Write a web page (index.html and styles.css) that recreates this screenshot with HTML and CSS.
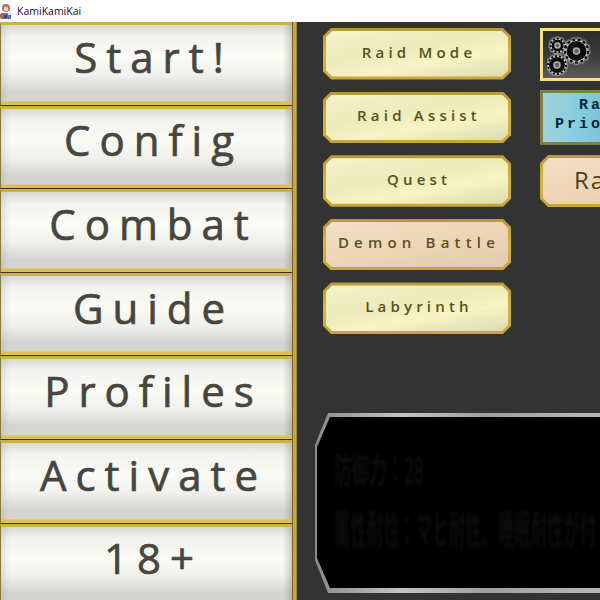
FILE: index.html
```html
<!DOCTYPE html>
<html lang="ja">
<head>
    <meta charset="UTF-8">
    <title>KamiKamiKai</title>
    <link rel="stylesheet" href="styles.css">
</head>
<body>
    <div class="titlebar">
        <svg class="appicon" width="16" height="16" viewBox="0 0 16 16">
            <rect x="1" y="10" width="10" height="6" fill="#6f6f96"/>
            <rect x="0" y="11" width="3" height="4" fill="#b5654a"/>
            <circle cx="6" cy="5" r="4" fill="#a8745a"/>
            <circle cx="6" cy="6" r="2.200" fill="#f2d2bc"/>
            <rect x="8" y="8" width="3" height="4" fill="#e8e4ea"/>
            <rect x="4" y="12" width="3" height="3" fill="#2d4f6c"/>
        </svg>
        <span>KamiKamiKai</span>
    </div>
    <div class="main">
        <div class="menu">
            <button class="menu-btn">Start!</button>
            <button class="menu-btn">Config</button>
            <button class="menu-btn">Combat</button>
            <button class="menu-btn">Guide</button>
            <button class="menu-btn">Profiles</button>
            <button class="menu-btn">Activate</button>
            <button class="menu-btn">18+</button>
        </div>
        <div class="content">
            <div class="columns">
                <div class="col">
                    <div class="gem"><div class="gem-in">Raid Mode</div></div>
                    <div class="gem"><div class="gem-in">Raid Assist</div></div>
                    <div class="gem"><div class="gem-in">Quest</div></div>
                    <div class="gem"><div class="gem-in peach">Demon Battle</div></div>
                    <div class="gem"><div class="gem-in">Labyrinth</div></div>
                </div>
                <div class="col col2">
                    <div class="gears">
                        <svg width="50" height="44" viewBox="0 0 50 44">
                            <g class="cog">
                                <circle cx="29.500" cy="19" r="10" class="body"/>
                                <circle cx="29.500" cy="19" r="11.500" class="teeth"/>
                                <circle cx="29.500" cy="19" r="3" class="hole"/>
                                <circle cx="10.500" cy="13.500" r="6" class="body"/>
                                <circle cx="10.500" cy="13.500" r="7" class="teeth small"/>
                                <circle cx="10.500" cy="13.500" r="2.500" class="hole"/>
                                <circle cx="10" cy="33" r="8" class="body"/>
                                <circle cx="10" cy="33" r="9" class="teeth small"/>
                                <circle cx="10" cy="33" r="3" class="hole"/>
                            </g>
                        </svg>
                    </div>
                    <div class="prio">Raid<br>Priority</div>
                    <div class="gem wide"><div class="gem-in peach big">Raid Boss</div></div>
                </div>
            </div>
            <div class="panel">
                <div class="panel-in">
                    <p class="l1">防御力：28</p>
                    <p class="l2">属性耐性：マヒ耐性、睡眠耐性が付</p>
                </div>
            </div>
        </div>
    </div>
</body>
</html>
```

FILE: styles.css
```css
html, body {
    margin: 0;
    height: 600px;
    overflow: hidden;
    background: #333333;
}
.titlebar {
    height: 22px;
    background: #fff;
    display: flex;
    align-items: center;
    font-family: "Open Sans", sans-serif;
    font-size: 10.500px;
    color: #1a0a30;
}
.appicon {
    margin-right: 1px;
    flex: none;
}
.main {
    display: flex;
    height: 578px;
    overflow: hidden;
}
.menu {
    width: 297px;
    flex: none;
    box-sizing: border-box;
    padding-right: 5px;
    background: linear-gradient(90deg, #6e6030 0, #6e6030 1px, #c9a93c 1.500px, #c9a93c 3.500px, #8a7a3a 100%) right / 5px 100% no-repeat;
}
.menu-btn {
    display: block;
    width: 100%;
    height: 83.600px;
    padding: 0 0 17px 14px;
    box-sizing: border-box;
    border: none;
    border-top: 3.500px solid #cdb244;
    border-bottom: 1px solid #3c3518;
    border-left: 1px solid #8a7a3a;
    box-shadow: inset 0 -3.500px 0 #dcc050;
    background:
        linear-gradient(90deg, rgba(170, 170, 160, .3) 0, transparent 3%, transparent 97%, rgba(140, 140, 130, .4) 100%),
        linear-gradient(180deg, #d8d8d4 0%, #f2f2ee 14%, #fbfbf6 40%, #f0f0ec 62%, #d4d4d0 84%, #d6d6d2 100%);
    font-family: "Open Sans", sans-serif;
    font-size: 42px;
    -webkit-text-stroke: 0.700px #46463f;
    letter-spacing: 9px;
    color: #46463f;
}
.content {
    flex: 1;
    min-width: 0;
}
.columns {
    display: flex;
    gap: 29px;
    padding: 6px 0 0 26px;
    height: 306px;
}
.col {
    display: flex;
    flex-direction: column;
    gap: 12px;
    width: 188px;
    flex: none;
}
.gem {
    height: 52px;
    background: linear-gradient(180deg, #b8983a 0%, #d6b440 50%, #c9a535 100%);
    clip-path: polygon(8px 0, calc(100% - 8px) 0, 100% 8px, 100% calc(100% - 8px), calc(100% - 8px) 100%, 8px 100%, 0 calc(100% - 8px), 0 8px);
    padding: 3px;
    box-sizing: border-box;
}
.gem-in {
    height: 100%;
    display: flex;
    align-items: center;
    justify-content: center;
    box-sizing: border-box;
    padding: 0 0 4px 4px;
    clip-path: polygon(6px 0, calc(100% - 6px) 0, 100% 6px, 100% calc(100% - 6px), calc(100% - 6px) 100%, 6px 100%, 0 calc(100% - 6px), 0 6px);
    background: linear-gradient(170deg, #f4f3cc 0%, #ecebb9 40%, #f6f4c2 65%, #dcdbb2 100%);
    font-family: "Open Sans", sans-serif;
    font-weight: 600;
    font-size: 15px;
    letter-spacing: 4.200px;
    color: #56521c;
}
.peach {
    letter-spacing: 5.200px;
    padding-bottom: 6px;
    background: linear-gradient(170deg, #f2dfc6 0%, #eed5b6 50%, #e0ccb0 100%);
}
.big {
    padding: 0 0 3px 6px;
    font-size: 24px;
    font-weight: 400;
    letter-spacing: 2px;
    color: #4e3c1c;
}
.col2 {
    gap: 0;
}
.gears {
    height: 53px;
    box-sizing: border-box;
    border: 3px solid #f6e08c;
    background: linear-gradient(180deg, #2c2c2c 0%, #3a3a3a 50%, #5c5c5c 100%);
    padding: 1px 0 0 4px;
}
.cog {
    filter: drop-shadow(0 0 .8px #fff) drop-shadow(0 0 .6px #eee);
}
.body {
    fill: #0c0c0c;
}
.teeth {
    fill: none;
    stroke: #0c0c0c;
    stroke-width: 2.500;
    stroke-dasharray: 3 2.500;
}
.teeth.small {
    stroke-width: 2;
    stroke-dasharray: 2.200 1.800;
}
.hole {
    fill: #666;
    stroke: #b0b0b0;
    stroke-width: 1.500;
}
.prio {
    width: 126px;
    margin-top: 9px;
    height: 55px;
    box-sizing: border-box;
    border: 3px solid #7d7f45;
    background: linear-gradient(90deg, #a2d2d8 0%, #85cde0 30%, #7dbccb 60%, #8cb0b4 100%);
    font-family: "Liberation Mono", monospace;
    font-weight: 700;
    font-size: 15px;
    line-height: 19px;
    letter-spacing: 3px;
    color: #06283a;
    text-align: center;
    padding-top: 3px;
}
.wide {
    margin-top: 10px;
}
.panel {
    margin: 79px 0 0 18px;
    height: 180px;
    background: linear-gradient(90deg, #8a8a8a 0%, #c4c4c4 30%, #a0a0a0 60%, #b8b8b8 100%);
    clip-path: polygon(13px 0, 100% 0, 100% 100%, 13px 100%, 0 calc(100% - 33px), 0 32px);
    padding: 4px 0 5px 2px;
    box-sizing: border-box;
}
.panel-in {
    height: 100%;
    background: #000;
    clip-path: polygon(13px 0, 100% 0, 100% 100%, 13px 100%, 0 calc(100% - 30px), 0 30px);
    padding: 26px 0 0 17px;
    box-sizing: border-box;
    overflow: hidden;
    font-family: "Noto Sans CJK JP", sans-serif;
    color: #131313;
}
.panel-in p {
    margin: 0;
    white-space: nowrap;
    filter: blur(0.9px);
    transform-origin: left top;
}
.l1 {
    font-size: 17.500px;
    line-height: 26px;
    transform: scale(1, 2);
}
.l2 {
    margin-top: 29px !important;
    font-size: 16.400px;
    line-height: 24px;
    transform: scale(1, 2.400);
}
```
